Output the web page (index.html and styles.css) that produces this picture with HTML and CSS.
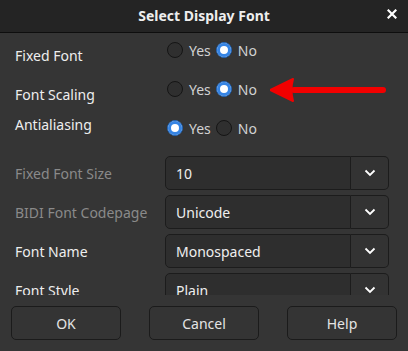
FILE: index.html
```html
<!DOCTYPE html>
<html lang="en">
<head>
  <meta charset="UTF-8">
  <title>Select Display Font</title>
  <link rel="stylesheet" href="styles.css">
</head>
<body>
  <div id="dialog">
    <div class="titlebar">
      <span class="title">Select Display Font</span>
      <span class="close">
        <svg width="10" height="10" viewBox="0 0 10 10"><path d="M1.5 1.5 L8.5 8.5 M8.5 1.5 L1.5 8.5" stroke="#fff" stroke-width="2.2" stroke-linecap="square"/></svg>
      </span>
    </div>

    <div class="content">
      <div class="radios">
        <div class="row">
          <span class="label low">Fixed Font</span>
          <div class="choice">
            <span class="radio"></span><span class="opt">Yes</span>
            <span class="radio on"></span><span class="opt">No</span>
          </div>
        </div>
        <div class="row">
          <span class="label low">Font Scaling</span>
          <div class="choice">
            <span class="radio"></span><span class="opt">Yes</span>
            <span class="radio on"></span><span class="opt">No</span>
          </div>
        </div>
        <div class="row">
          <span class="label high">Antialiasing</span>
          <div class="choice">
            <span class="radio on"></span><span class="opt">Yes</span>
            <span class="radio"></span><span class="opt">No</span>
          </div>
        </div>
      </div>

      <div class="combos">
        <div class="row">
          <span class="label off">Fixed Font Size</span>
          <div class="combo"><span class="field">10</span><span class="drop"><svg width="12" height="8" viewBox="0 0 12 8"><path d="M1.5 1.5 L6 6 L10.5 1.5" fill="none" stroke="#fff" stroke-width="1.8"/></svg></span></div>
        </div>
        <div class="row">
          <span class="label off">BIDI Font Codepage</span>
          <div class="combo"><span class="field">Unicode</span><span class="drop"><svg width="12" height="8" viewBox="0 0 12 8"><path d="M1.5 1.5 L6 6 L10.5 1.5" fill="none" stroke="#fff" stroke-width="1.8"/></svg></span></div>
        </div>
        <div class="row">
          <span class="label">Font Name</span>
          <div class="combo"><span class="field">Monospaced</span><span class="drop"><svg width="12" height="8" viewBox="0 0 12 8"><path d="M1.5 1.5 L6 6 L10.5 1.5" fill="none" stroke="#fff" stroke-width="1.8"/></svg></span></div>
        </div>
        <div class="row">
          <span class="label">Font Style</span>
          <div class="combo"><span class="field">Plain</span><span class="drop"><svg width="12" height="8" viewBox="0 0 12 8"><path d="M1.5 1.5 L6 6 L10.5 1.5" fill="none" stroke="#fff" stroke-width="1.8"/></svg></span></div>
        </div>
      </div>

      <!-- annotation arrow -->
      <svg class="arrow" width="120" height="30" viewBox="0 0 120 30">
        <path d="M24 15 L113 15" stroke="#f20000" stroke-width="6" stroke-linecap="round"/>
        <path d="M0 15 L23 4 Q20 15 23 26 Z" fill="#f20000" stroke="#f20000" stroke-width="2" stroke-linejoin="round"/>
      </svg>
    </div>

    <div class="actions">
      <button class="btn">OK</button>
      <button class="btn">Cancel</button>
      <button class="btn">Help</button>
    </div>
  </div>
</body>
</html>
```

FILE: styles.css
```css
html, body{
  margin: 0;
  padding: 0;
}
body{
  background: #353535;
  font-family: "Noto Sans", "DejaVu Sans", sans-serif;
  font-size: 14px;
  color: #eeeeee;
}
#dialog{
  width: 408px;
  height: 351px;
  display: flex;
  flex-direction: column;
  background: #353535;
}
.titlebar{
  height: 32px;
  background: #242424;
  border-bottom: 1px solid #0e0e0e;
  position: relative;
  display: flex;
  align-items: center;
  justify-content: center;
  flex-shrink: 0;
}
.title{
  font-weight: bold;
  font-size: 14px;
  color: #eeeeee;
  margin-top: -1px;
}
.close{
  position: absolute;
  right: 11px;
  top: 9px;
  width: 10px;
  height: 10px;
  display: flex;
}
.content{
  position: relative;
  height: 262px;
  overflow: hidden;
  padding: 0 19px 0 15px;
  flex-shrink: 0;
}
.radios, .combos{
  display: flex;
  flex-direction: column;
  gap: 5px;
}
.combos{
  margin-top: 11px;
}
.row{
  height: 34px;
  display: grid;
  grid-template-columns: 150px 1fr;
  align-items: center;
  flex-shrink: 0;
}
.label{
  line-height: 19px;
  white-space: nowrap;
}
.label.low{
  align-self: end;
  margin-bottom: 2px;
}
.label.high{
  align-self: start;
  margin-top: 4px;
}
.label.off{
  color: #8a8a8a;
}
.choice{
  display: flex;
  align-items: center;
  padding-left: 2px;
}
.radio{
  width: 14px;
  height: 14px;
  border-radius: 50%;
  border: 1px solid #151515;
  background: #2f2f2f;
  box-sizing: content-box;
  margin-right: 6px;
}
.radio.on{
  background: #ffffff;
  border: 1px solid #1a5fb4;
  box-shadow: inset 0 0 0 3px #3584e4;
}
.opt{
  color: #d2d2d2;
  margin-right: 5px;
}
.combo{
  display: flex;
  height: 34px;
}
.field{
  flex: 1;
  background: #2e2e2e;
  border: 1px solid #1c1c1c;
  border-radius: 5px 0 0 5px;
  padding-left: 10px;
  display: flex;
  align-items: center;
  color: #eeeeee;
}
.drop{
  width: 37px;
  background: #333333;
  border: 1px solid #1c1c1c;
  border-left: none;
  border-radius: 0 5px 5px 0;
  display: flex;
  align-items: center;
  justify-content: center;
}
.arrow{
  position: absolute;
  left: 270px;
  top: 42px;
}
.actions{
  display: flex;
  justify-content: space-between;
  padding: 11px 11px 0 11px;
}
.btn{
  width: 110px;
  height: 34px;
  background: #343434;
  border: 1px solid #1b1b1b;
  border-radius: 5px;
  color: #e4e4e4;
  font-family: "Noto Sans", "DejaVu Sans", sans-serif;
  font-size: 14px;
}
```
